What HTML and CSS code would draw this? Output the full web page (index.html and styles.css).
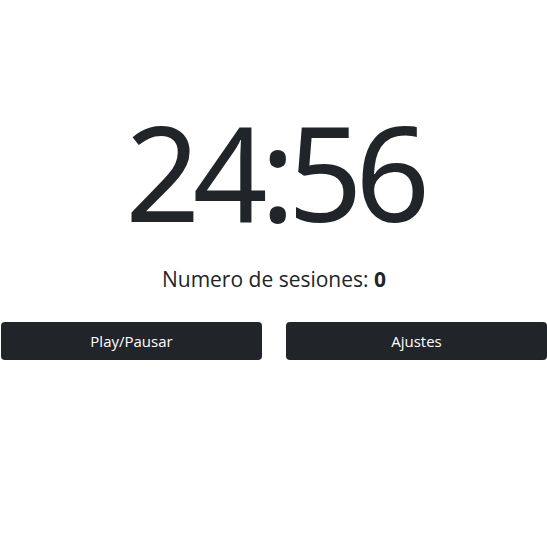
FILE: index.html
```html
<!DOCTYPE html>
<html lang="es">
<head>
<meta charset="utf-8">
<title>Pomodoro</title>
<link rel="stylesheet" href="styles.css">
</head>
<body>
<main class="app">
  <h1 class="timer">24:56</h1>
  <p class="sessions">Numero de sesiones: <strong>0</strong></p>
  <div class="actions">
    <button class="btn" type="button">Play/Pausar</button>
    <button class="btn" type="button">Ajustes</button>
  </div>
</main>
</body>
</html>
```
FILE: styles.css
```css
html, body {
  margin: 0;
  padding: 0;
  background: #fff;
}
body {
  font-family: "Open Sans", "Noto Sans", sans-serif;
  color: #212529;
}
.app {
  padding: 105px 0 0 1px;
  display: flex;
  flex-direction: column;
  align-items: stretch;
}
.timer {
  margin: 0;
  font-family: "Noto Sans", "Open Sans", sans-serif;
  font-size: 131px;
  line-height: 132px;
  font-weight: 380;
  letter-spacing: -7.5px;
  text-align: center;
}
.sessions {
  margin: 29px 0 0;
  font-size: 21px;
  line-height: 26px;
  text-align: center;
}
.sessions strong {
  font-weight: 700;
}
.actions {
  margin-top: 30px;
  display: grid;
  grid-template-columns: 1fr 1fr;
  column-gap: 24px;
}
.btn {
  height: 38px;
  border: 0;
  border-radius: 4px;
  background: #212529;
  color: #fff;
  font-family: "Open Sans", "Noto Sans", sans-serif;
  font-size: 15px;
  padding: 0 12px;
}
```
